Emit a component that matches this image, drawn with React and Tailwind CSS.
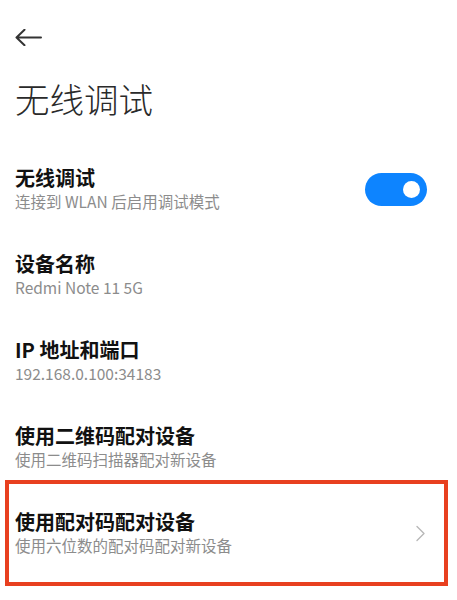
import React from 'react';

const FONT = { fontFamily: '"Noto Sans CJK SC", "Noto Sans", sans-serif' };

function Toggle() {
  return (
    <div className="w-[62px] h-[33px] rounded-full bg-[#0d84ff] flex items-center justify-end pr-[7px] shrink-0">
      <div className="w-[17px] h-[17px] rounded-full bg-white" />
    </div>
  );
}

function Chevron() {
  return (
    <svg width="11" height="17" viewBox="0 0 11 17" className="shrink-0 mr-[1px]">
      <path d="M2 1.5 L9 8.5 L2 15.5" fill="none" stroke="#b8b8b8" strokeWidth="1.4" strokeLinecap="round" strokeLinejoin="round" />
    </svg>
  );
}

function Item({ title, sub, right, boxed }) {
  return (
    <div className="relative flex items-center justify-between pl-[15px] pr-[30px] py-[20px]">
      <div className="flex flex-col">
        <div className="text-[20px] leading-[24px] font-semibold text-[#111]">{title}</div>
        <div className="text-[15.5px] leading-[22px] text-[#8c8c8c]">{sub}</div>
      </div>
      {right}
      {boxed && (
        <div className="absolute top-[-10px] bottom-[-10px] left-[5px] right-[9px] border-[4px] border-[#e8401f] pointer-events-none" />
      )}
    </div>
  );
}

export default function App() {
  return (
    <div className="w-[457px] h-[600px] bg-white overflow-hidden" style={FONT}>
      {/* header */}
      <div className="pl-[15px] pt-[29px]">
        <svg width="27" height="17" viewBox="0 0 27 17" className="block">
          <path d="M1.5 8.5 H26 M9.5 0.8 L1.5 8.5 L9.5 16.2" fill="none" stroke="#333" strokeWidth="2" strokeLinecap="round" strokeLinejoin="round" />
        </svg>
        <h1 className="mt-[28px] mb-[24px] text-[34.5px] leading-[48px] font-light text-[#2a2a2a]">无线调试</h1>
      </div>

      <Item title="无线调试" sub="连接到 WLAN 后启用调试模式" right={<Toggle />} />
      <Item title="设备名称" sub="Redmi Note 11 5G" />
      <Item title="IP 地址和端口" sub="192.168.0.100:34183" />
      <Item title="使用二维码配对设备" sub="使用二维码扫描器配对新设备" />
      <Item title="使用配对码配对设备" sub="使用六位数的配对码配对新设备" right={<Chevron />} boxed />
    </div>
  );
}
